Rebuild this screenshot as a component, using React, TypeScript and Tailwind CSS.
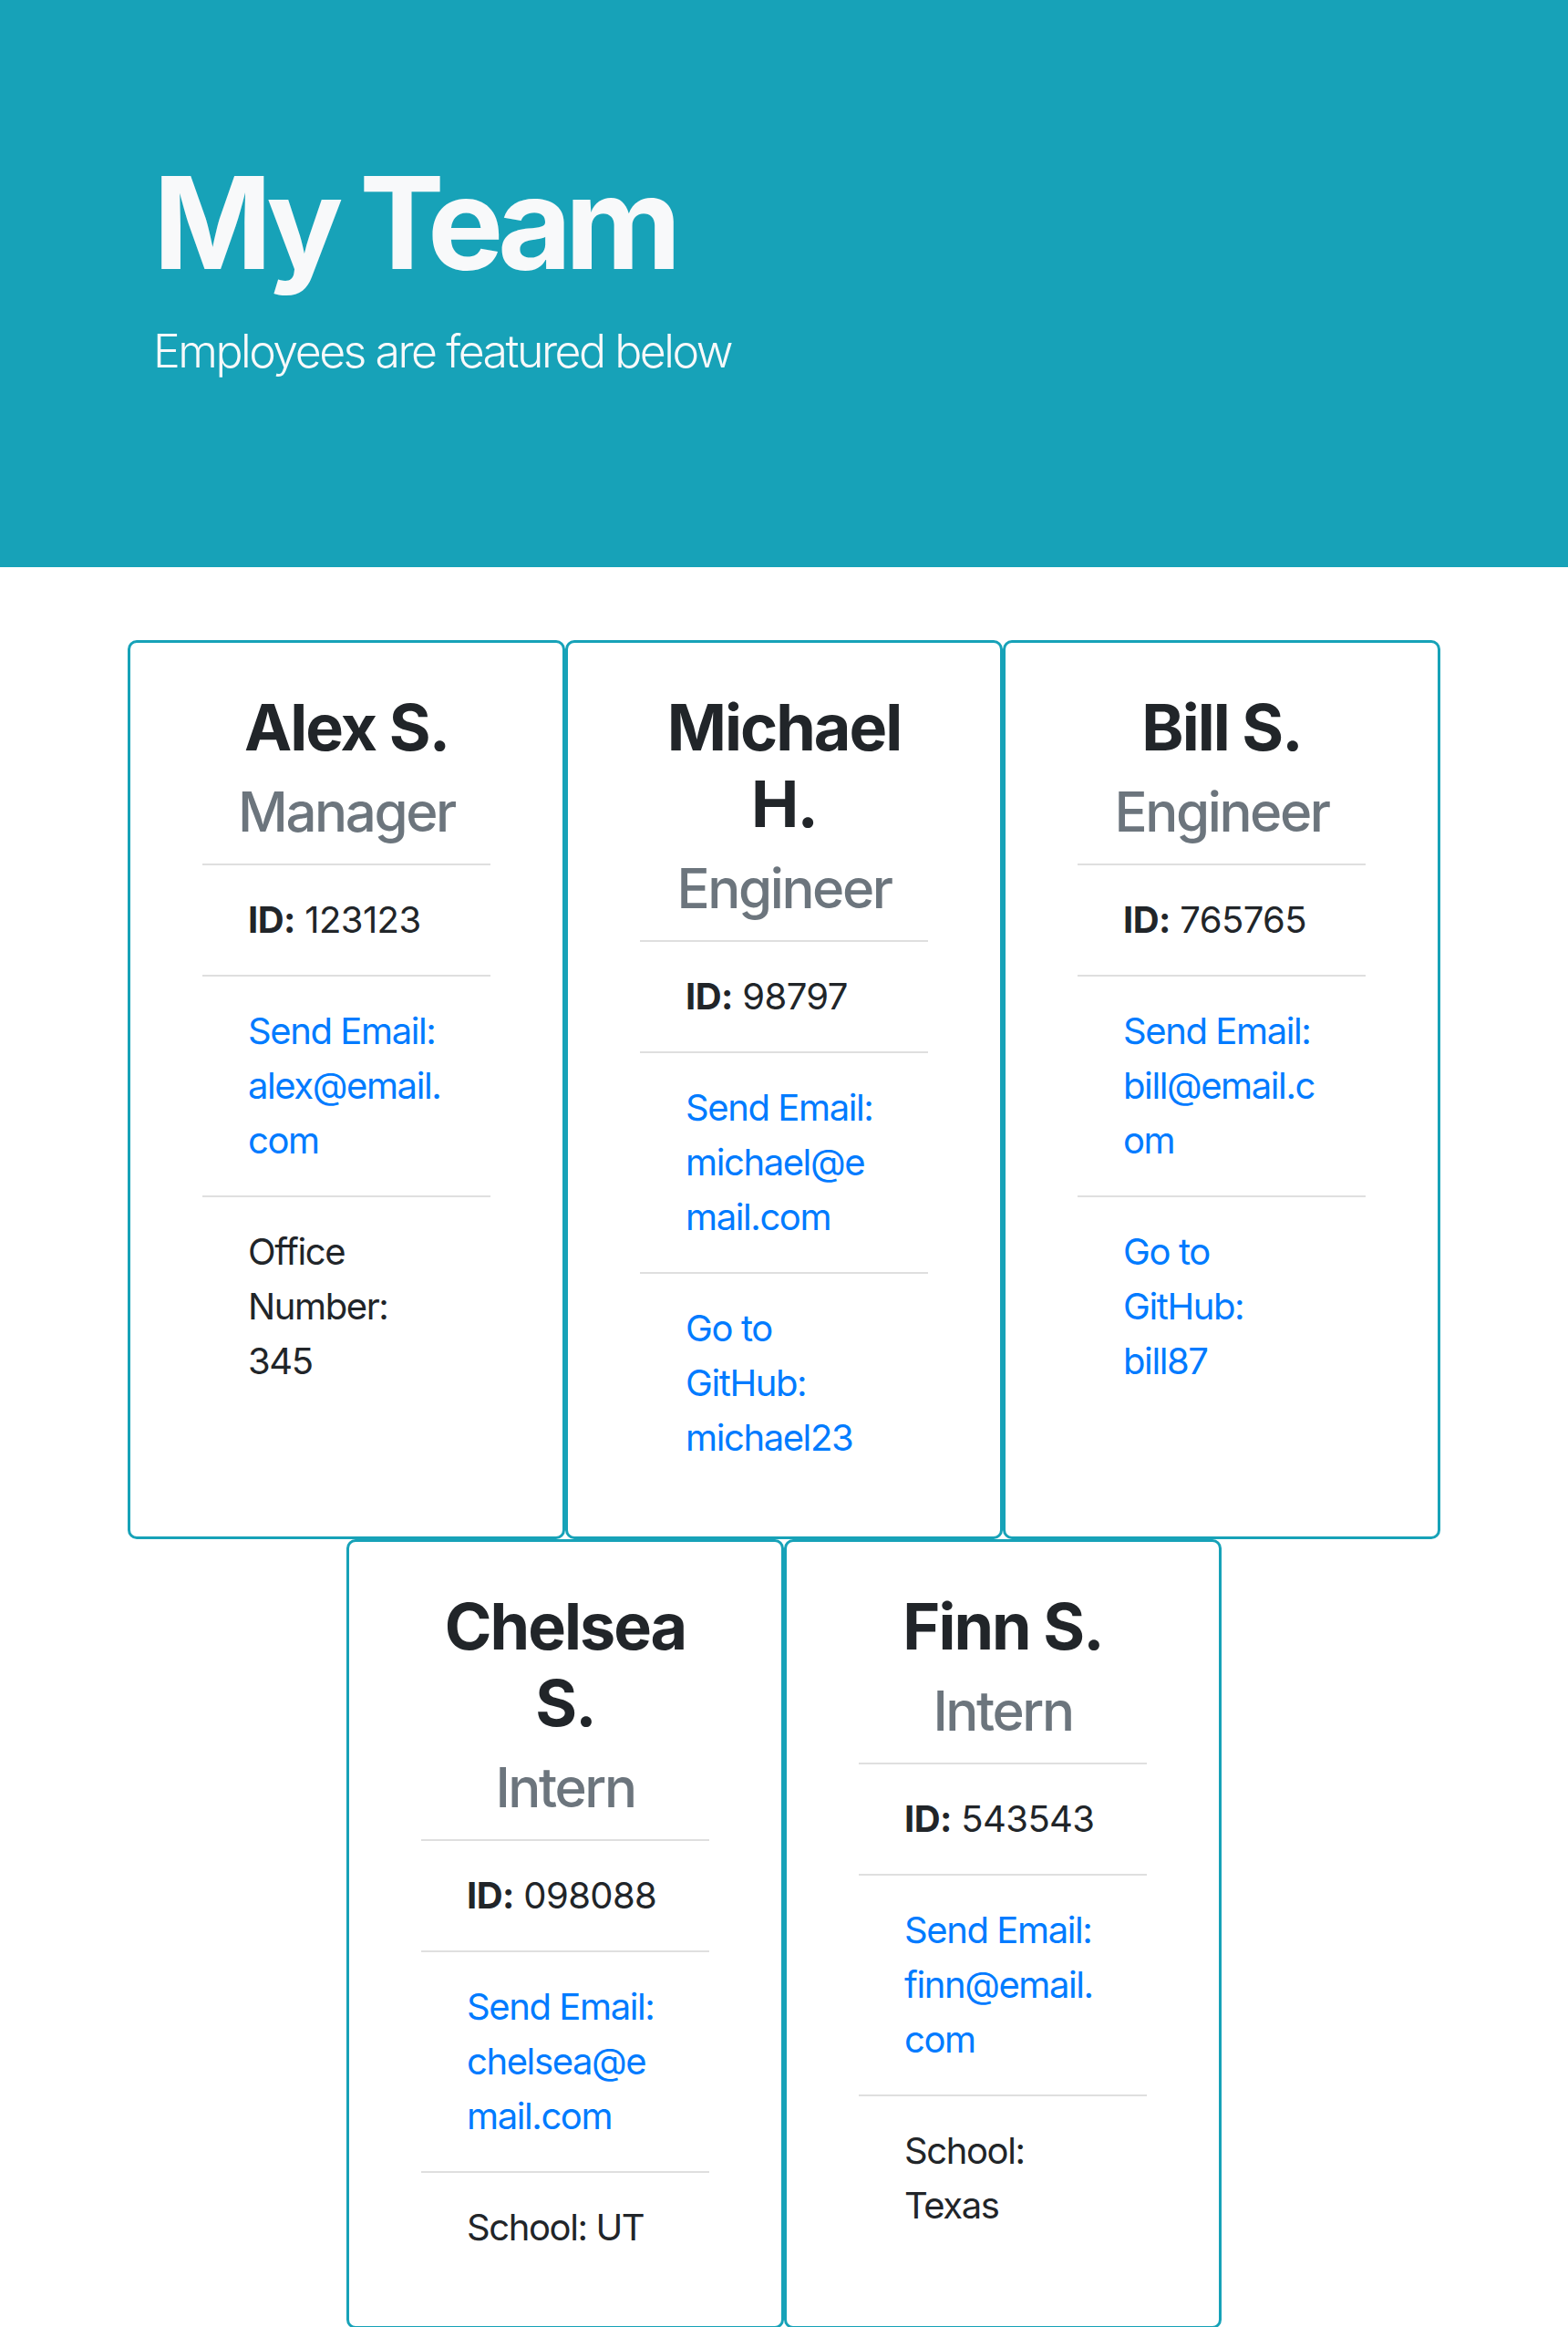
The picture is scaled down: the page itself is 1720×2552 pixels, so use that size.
import { FC } from 'react';

type Detail = {
  lines: string[];
  link?: boolean;
};

type Employee = {
  name: string;
  role: string;
  id: string;
  email: string[];
  extra: Detail;
};

const employees: Employee[] = [
  {
    name: 'Alex S.',
    role: 'Manager',
    id: '123123',
    email: ['Send Email:', 'alex@email.', 'com'],
    extra: { lines: ['Office', 'Number:', '345'] },
  },
  {
    name: 'Michael H.',
    role: 'Engineer',
    id: '98797',
    email: ['Send Email:', 'michael@e', 'mail.com'],
    extra: { lines: ['Go to', 'GitHub:', 'michael23'], link: true },
  },
  {
    name: 'Bill S.',
    role: 'Engineer',
    id: '765765',
    email: ['Send Email:', 'bill@email.c', 'om'],
    extra: { lines: ['Go to', 'GitHub:', 'bill87'], link: true },
  },
  {
    name: 'Chelsea S.',
    role: 'Intern',
    id: '098088',
    email: ['Send Email:', 'chelsea@e', 'mail.com'],
    extra: { lines: ['School: UT'] },
  },
  {
    name: 'Finn S.',
    role: 'Intern',
    id: '543543',
    email: ['Send Email:', 'finn@email.', 'com'],
    extra: { lines: ['School:', 'Texas'] },
  },
];

// one block per rendered line, so the wraps land where the original's did
const Lines: FC<{ lines: string[] }> = ({ lines }) => (
  <>
    {lines.map((line, i) => (
      <span key={i} className="block whitespace-nowrap">
        {line}
      </span>
    ))}
  </>
);

const EmployeeCard: FC<{ employee: Employee }> = ({ employee }) => {
  const { name, role, id, email, extra } = employee;

  return (
    <div className="w-[480px] border-[3px] border-[#17a2b8] rounded-[10px] bg-white px-[79px] pt-[51px] pb-[48px]">
      <h2 className="text-center text-[70px] leading-[84px] font-bold tracking-[-0.028em] text-[#212529]">{name}</h2>
      <h3 className="mt-[14px] text-center text-[60px] leading-[72px] font-medium tracking-[-0.04em] text-[#6c757d]">
        {role}
      </h3>

      <ul className="mt-[21px] text-[40px] leading-[60px] tracking-[-0.035em] text-[#212529]">
        <li className="border-t-2 border-[#dfdfdf] px-[50px] py-[30px] whitespace-nowrap tracking-[-0.015em]">
          <strong className="font-bold">ID:</strong> {id}
        </li>
        <li className="border-t-2 border-[#dfdfdf] px-[50px] py-[30px]">
          <a href={`mailto:${email.slice(1).join('')}`} className="text-[#007bff]">
            <Lines lines={email} />
          </a>
        </li>
        <li className="border-t-2 border-[#dfdfdf] px-[50px] py-[30px]">
          {extra.link ? (
            <a href="#" className="text-[#007bff]">
              <Lines lines={extra.lines} />
            </a>
          ) : (
            <Lines lines={extra.lines} />
          )}
        </li>
      </ul>
    </div>
  );
};

const App: FC = () => {
  return (
    <div className="min-h-screen bg-white" style={{ fontFamily: 'Inter, "Liberation Sans", sans-serif' }}>
      <header className="bg-[#17a2b8] pl-[168px] pt-[160px] pb-[159px]">
        <h1 className="mb-[20px] text-[140px] leading-[168px] font-bold tracking-[-0.055em] text-[#f8f9fa]">My Team</h1>
        <p className="mb-[40px] text-[50px] leading-[75px] font-light tracking-[-0.05em] text-[#f8f9fa]">
          Employees are featured below
        </p>
      </header>

      <main className="mt-[80px] flex justify-center">
        <div className="flex w-[1440px] flex-wrap justify-center">
          {employees.map((employee) => (
            <EmployeeCard key={employee.id} employee={employee} />
          ))}
        </div>
      </main>
    </div>
  );
};

export default App;
